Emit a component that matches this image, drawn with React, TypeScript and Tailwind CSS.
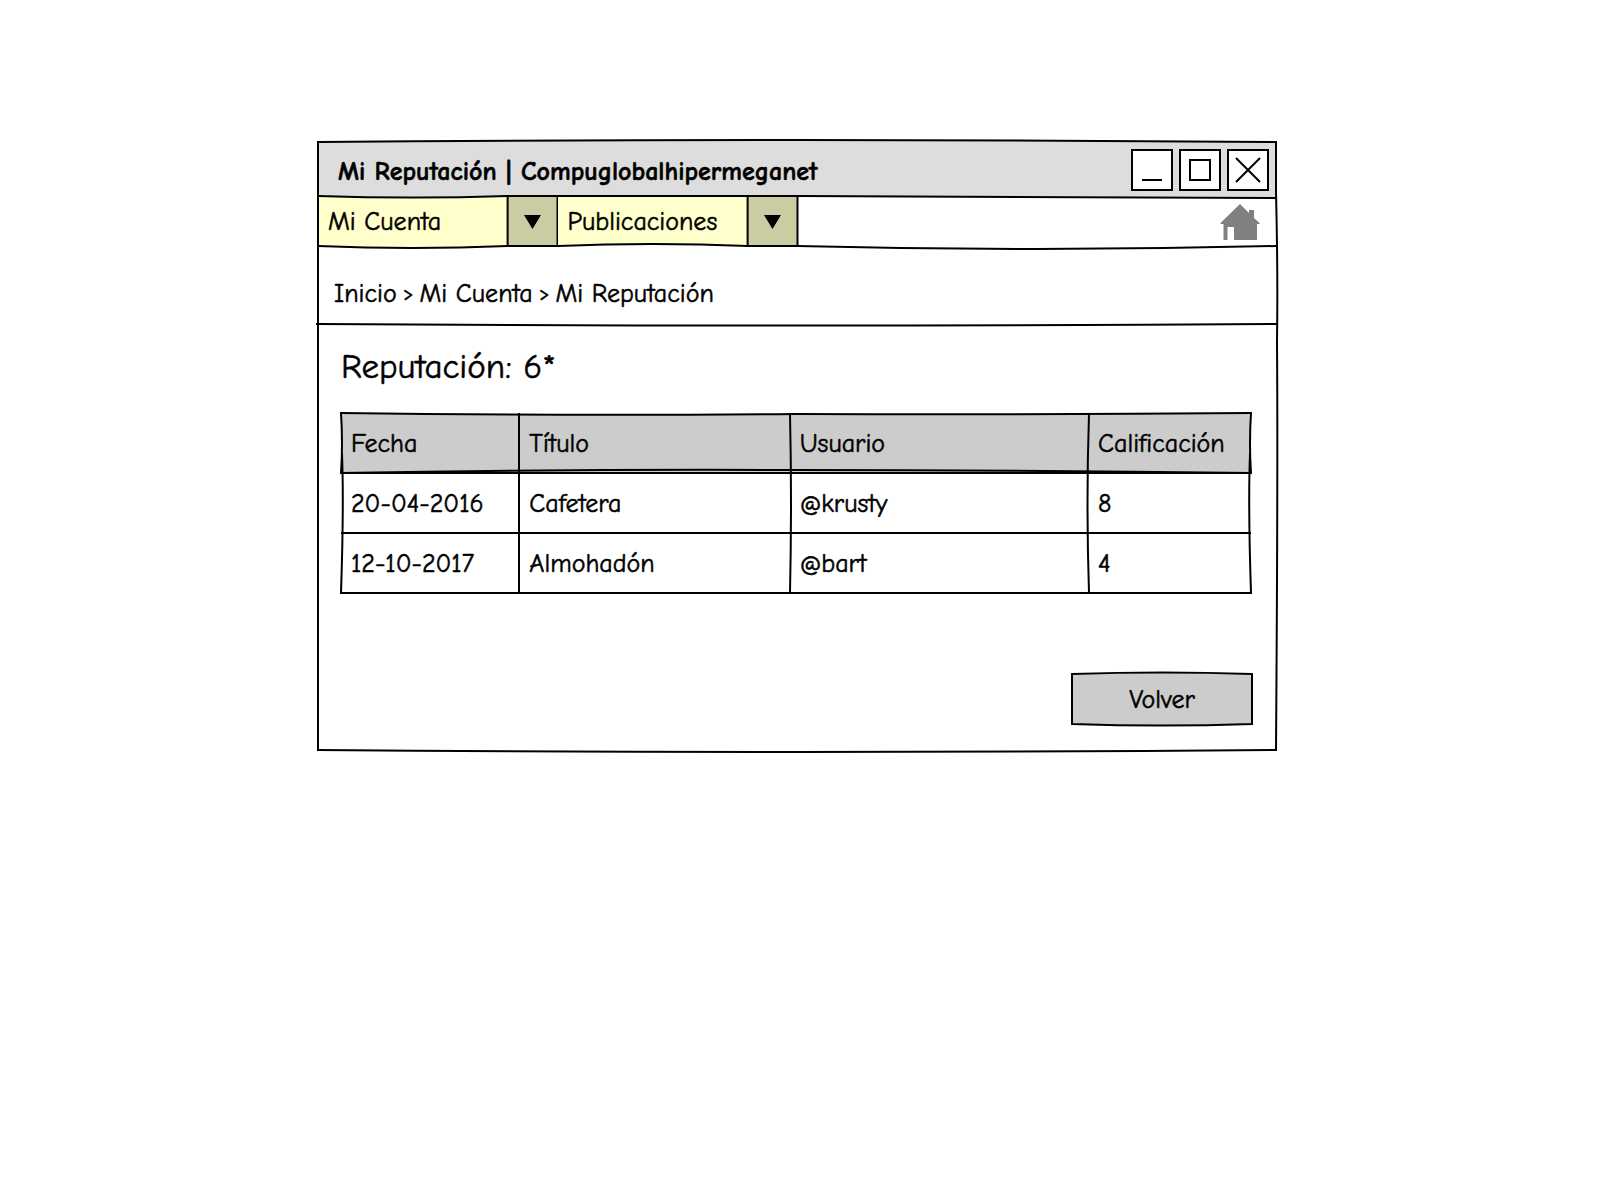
import type { ReactNode } from "react";

type SketchProps = {
  width: number;
  height: number;
  fill?: string;
  fillPath?: string;
  lines: string[];
};

/* Hand-drawn strokes stretched over the parent box. */
function Sketch({ width, height, fill = "none", fillPath, lines }: SketchProps) {
  return (
    <svg
      aria-hidden="true"
      viewBox={`0 0 ${width} ${height}`}
      preserveAspectRatio="none"
      className="pointer-events-none absolute inset-0 h-full w-full overflow-visible"
    >
      {fillPath && <path d={fillPath} fill={fill} />}
      {lines.map((d) => (
        <path
          key={d}
          d={d}
          fill="none"
          stroke="#000"
          strokeWidth="2"
          strokeLinecap="square"
          vectorEffect="non-scaling-stroke"
        />
      ))}
    </svg>
  );
}

function WindowButton({ label, children }: { label: string; children: ReactNode }) {
  return (
    <button type="button" aria-label={label} className="size-[42px] border-2 border-black bg-white">
      <svg viewBox="0 0 38 38" className="block size-full" fill="none" stroke="#000" strokeWidth="2">
        {children}
      </svg>
    </button>
  );
}

type MenuProps = { label: string; options: string[]; edge: string; fillPath: string };

function Menu({ label, options, edge, fillPath }: MenuProps) {
  return (
    <div className="relative grid w-1/4 grid-cols-[1fr_50px]">
      <Sketch width={240} height={49} fill="#ffffcc" fillPath={fillPath} lines={[]} />
      <span className="col-start-2 row-start-1 bg-[#cccca3]" />
      <Sketch
        width={240}
        height={49}
        lines={[edge, "M190 -1 V49", "M240 -1 V49", "M190 -1 H240", "M190 49 H240"]}
      />
      <select
        aria-label={label}
        className="relative col-span-2 col-start-1 row-start-1 w-full appearance-none bg-transparent pl-[10px] text-[26px] text-black"
      >
        {options.map((o) => (
          <option key={o}>{o}</option>
        ))}
      </select>
      <svg
        aria-hidden="true"
        viewBox="0 0 17 14"
        className="pointer-events-none relative col-start-2 row-start-1 h-[14px] w-[17px] place-self-center"
      >
        <path d="M0 0 H17 L8.5 14 Z" />
      </svg>
    </div>
  );
}

const rows = [
  ["20-04-2016", "Cafetera", "@krusty", "8"],
  ["12-10-2017", "Almohadón", "@bart", "4"],
];

export default function App() {
  return (
    <main className="min-h-screen bg-white pt-[142px] font-['Comic_Sans_MS','Comic_Neue','Liberation_Sans',sans-serif] text-[26px] leading-9 text-black [-webkit-text-stroke:thin] [font-variant-ligatures:none]">
      <section className="relative ml-[calc(20%-2px)] w-[calc(60%-2px)]">
        <header className="relative flex h-[55px] items-center justify-between pr-[7px] pl-5">
          <Sketch
            width={958}
            height={55}
            fill="#dddddd"
            fillPath="M0 0 Q479 -4 958 0 V56 Q479 52 0 55 Z"
            lines={["M190 54 H480 Q720 54 958 56"]}
          />
          <h1 className="relative pt-1 font-bold whitespace-pre">Mi Reputación | Compuglobalhipermeganet</h1>
          <div className="relative flex gap-[6px]">
            <WindowButton label="Minimizar">
              <path d="M9 29 H29" />
            </WindowButton>
            <WindowButton label="Maximizar">
              <path d="M9 9 H29 V29 H9 Z" />
            </WindowButton>
            <WindowButton label="Cerrar">
              <path d="M7 7 L31 31 M31 7 L7 31" />
            </WindowButton>
          </div>
        </header>

        <nav aria-label="Principal" className="relative flex h-[49px]">
          <Menu
            label="Mi Cuenta"
            options={["Mi Cuenta", "Mi Reputación"]}
            edge="M0 49 Q95 53 190 49 M0 -1 Q95 2 190 -1"
            fillPath="M0 -1 Q95 2 190 -1 V49 Q95 53 0 49 Z"
          />
          <Menu
            label="Publicaciones"
            options={["Publicaciones"]}
            edge="M0 49 Q95 45 190 49 M0 -1 H190"
            fillPath="M0 -1 H190 V49 Q95 45 0 49 Z"
          />
          <div className="relative flex flex-1 items-center justify-end pr-4">
            <Sketch width={480} height={49} lines={["M0 49 Q240 55 480 49"]} />
            <a href="#inicio" aria-label="Inicio" className="relative block">
              <svg viewBox="0 0 40 36" className="block h-9 w-10" fill="#808080">
                <path d="M20 0 L29 9 V6 H34 V14 L39.5 19 V20 H37 V36 H14 V23 H7.5 V36 H3.5 V20 H0.5 V19 Z" />
              </svg>
            </a>
          </div>
        </nav>

        <nav aria-label="Ruta" className="relative flex h-[78px] items-center gap-[6px] pt-[18px] pl-4 whitespace-nowrap">
          <Sketch width={958} height={78} lines={["M-1 78 Q479 81 958 78"]} />
          <a href="#inicio" className="relative">Inicio</a>
          <span className="relative text-xl">&gt;</span>
          <a href="#cuenta" className="relative">Mi Cuenta</a>
          <span className="relative text-xl">&gt;</span>
          <a href="#reputacion" className="relative">Mi Reputación</a>
        </nav>

        <div className="pt-[23px] pr-[25px] pb-[26px] pl-[23px]">
          <h2 className="text-[35px] leading-10">Reputación: 6*</h2>

          <div className="relative mt-[27px]">
            <Sketch width={910} height={179} fill="#cccccc" fillPath="M0 0 H910 V59 H0 Z" lines={[]} />
            <table className="relative w-full table-fixed text-left">
              <colgroup>
                <col className="w-[19.6%]" />
                <col className="w-[29.7%]" />
                <col className="w-[32.8%]" />
                <col className="w-[17.9%]" />
              </colgroup>
              <thead>
                <tr className="h-[59px]">
                  {["Fecha", "Título", "Usuario", "Calificación"].map((h) => (
                    <th key={h} scope="col" className="pl-[10px] font-normal">
                      {h}
                    </th>
                  ))}
                </tr>
              </thead>
              <tbody>
                {rows.map((r) => (
                  <tr key={r[0]} className="h-[60px]">
                    {r.map((c) => (
                      <td key={c} className="pt-0.5 pl-[10px]">
                        {c}
                      </td>
                    ))}
                  </tr>
                ))}
              </tbody>
            </table>
            <Sketch
              width={910}
              height={179}
              lines={[
                "M0 -1 Q227 2 455 0 Q680 1 910 -1",
                "M0 59 H910",
                "M0 59 Q227 55 455 56 Q680 56 910 59",
                "M1 119 H909",
                "M0 179 H910",
                "M0 -1 Q2 30 0 59",
                "M1 40 Q3 89 0 179",
                "M178 0 V179",
                "M449 0 Q451 89 449 179",
                "M748 0 Q745 89 748 179",
                "M910 -1 Q908 30 910 59",
                "M909 40 Q907 89 910 179",
              ]}
            />
          </div>

          <div className="mt-[81px] flex justify-end">
            <button type="button" className="relative -mr-px h-[50px] w-[180px] pt-0.5">
              <Sketch
                width={180}
                height={50}
                fill="#cccccc"
                fillPath="M0 0 Q90 -3 180 0 V50 Q90 53 0 50 Z"
                lines={["M0 0 Q90 -3 180 0 V50 Q90 53 0 50 Z"]}
              />
              <span className="relative">Volver</span>
            </button>
          </div>
        </div>

        <Sketch
          width={958}
          height={608}
          lines={["M0 0 Q479 -4 958 0", "M0 608 Q479 612 958 608", "M0 0 V608", "M958 0 V50 Q960 130 959 200 Q960 330 958 608"]}
        />
      </section>
    </main>
  );
}
